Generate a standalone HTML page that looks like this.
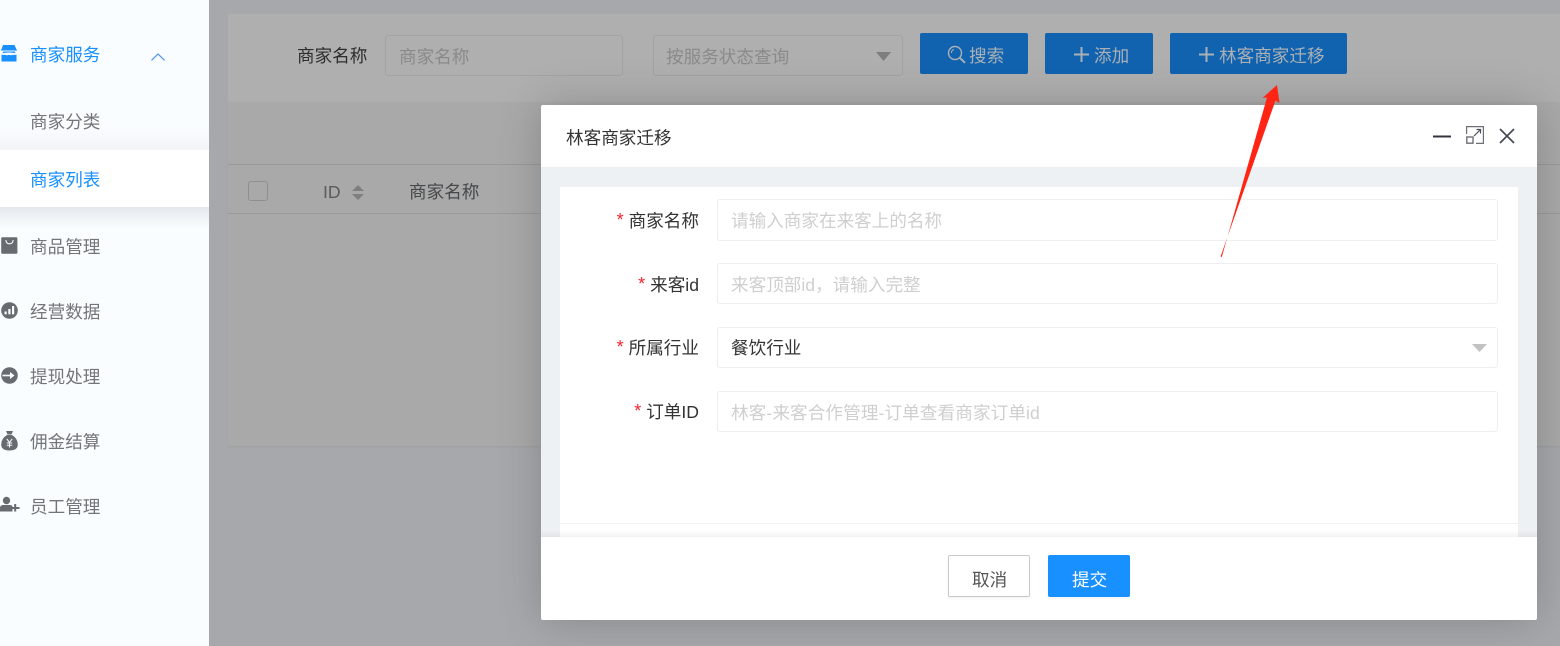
<!DOCTYPE html>
<html lang="zh">
<head>
<meta charset="utf-8">
<title>林客商家迁移</title>
<style>
html,body{margin:0;padding:0;width:1560px;height:646px;overflow:hidden;background:#a6a8ab;}
body{position:relative;font-family:"Liberation Sans","Noto Sans CJK SC",sans-serif;font-size:17.6px;color:#333;}
.a{position:absolute;}
.t{position:absolute;white-space:nowrap;line-height:24px;height:24px;}
#side{left:0;top:0;width:209px;height:646px;background:#fafdff;}
.grey{color:#737577;}
.blue{color:#1890ff;}
.btn{position:absolute;top:33px;height:41px;background:#1162af;border-radius:2px;color:#a9b0b6;}
.inp{position:absolute;left:717px;width:779px;border:1px solid #eeeeee;border-radius:3px;background:#fff;}
.lab{position:absolute;width:200px;left:499px;text-align:right;color:#333;line-height:24px;height:24px;white-space:nowrap;}
.lab i{font-style:normal;color:#f5222d;font-size:18px;margin-right:5px;position:relative;top:-1px;}
.ph{color:#cfcfcf;}
svg{position:absolute;overflow:visible;}
</style>
</head>
<body>
<!-- sidebar -->
<div id="side" class="a">
  <div class="a" style="left:0;top:126px;width:209px;height:24px;background:linear-gradient(#fafdff,#f2f4f7);"></div>
  <div class="a" style="left:0;top:150px;width:209px;height:57px;background:#fff;"></div>
  <div class="a" style="left:0;top:207px;width:209px;height:22px;background:linear-gradient(#e4e8ed,#fafdff);"></div>
</div>
<svg style="left:0;top:44px" width="18" height="18" viewBox="0 0 18 18">
  <path d="M3 1H14.500L17 6.500Q16.500 6.800 15 6.500H3Q1.500 6.800 1 6.500Z" fill="#1890ff"/>
  <path d="M3.200 7.500H14.800L15.500 9.300Q13 8.500 9 8.500 5 8.500 2.500 9.300Z" fill="#1890ff"/>
  <path d="M1.500 10.500Q3.500 11.300 5 10.800 7 11.800 9 10.800 11 11.800 13 10.800 14.500 11.300 16.500 10.500V17.500H1.500Z" fill="#1890ff"/>
</svg>
<div class="t blue" style="left:30px;top:43px">商家服务</div>
<svg style="left:151px;top:53px" width="14" height="8" viewBox="0 0 14 8"><path d="M.5 7.300L7 1 13.500 7.300" fill="none" stroke="#4d95ea" stroke-width="1.200"/></svg>
<div class="t grey" style="left:30px;top:110px">商家分类</div>
<div class="t blue" style="left:30px;top:168px">商家列表</div>
<svg style="left:1px;top:237px" width="17" height="17" viewBox="0 0 17 17">
  <rect x=".2" y=".2" width="16.200" height="16.600" rx="1" fill="#686b70"/>
  <path d="M5 3V3.800Q5.500 6.800 8.500 6.800 11.500 6.800 12 3.800V3" fill="none" stroke="#fafdff" stroke-width="1.100"/>
</svg>
<div class="t grey" style="left:30px;top:235px">商品管理</div>
<svg style="left:1px;top:302px" width="17" height="17" viewBox="0 0 17 17">
  <circle cx="8.500" cy="8.500" r="8.300" fill="#686b70"/>
  <rect x="3.500" y="9.500" width="2.200" height="2.800" fill="#fafdff"/>
  <rect x="7.300" y="7" width="2.200" height="5.300" fill="#fafdff"/>
  <rect x="11" y="4" width="2.200" height="8.300" fill="#fafdff"/>
</svg>
<div class="t grey" style="left:30px;top:300px">经营数据</div>
<svg style="left:1px;top:367px" width="17" height="17" viewBox="0 0 17 17">
  <circle cx="8.500" cy="8.500" r="8.300" fill="#686b70"/>
  <path d="M1.500 8.500H10" stroke="#fafdff" stroke-width="1.600"/>
  <path d="M9 5L13.500 8.500 9 12Z" fill="#fafdff"/>
</svg>
<div class="t grey" style="left:30px;top:365px">提现处理</div>
<svg style="left:1px;top:430px" width="17" height="21" viewBox="0 0 17 21">
  <path d="M5 1H12L10.500 4.500H6.500Z" fill="#686b70"/>
  <path d="M6 5H11Q16.800 8.500 16.800 14.500 16.800 20.500 8.500 20.500 .2 20.500 .2 14.500 .2 8.500 6 5Z" fill="#686b70"/>
  <path d="M5.800 9L8.500 12.300 11.200 9M8.500 12.300V17.500M5.800 13H11.200M5.800 15.200H11.200" fill="none" stroke="#fafdff" stroke-width="1"/>
</svg>
<div class="t grey" style="left:30px;top:430px">佣金结算</div>
<svg style="left:0;top:496px" width="20" height="18" viewBox="0 0 20 18">
  <circle cx="6.500" cy="4.500" r="3.700" fill="#686b70"/>
  <path d="M0 15.500V12Q0 9 3 9H10Q12 9 12.500 10.500V15.500Z" fill="#686b70"/>
  <path d="M11 12H19.500M15.200 8V15.500" stroke="#686b70" stroke-width="2"/>
</svg>
<div class="t grey" style="left:30px;top:495px">员工管理</div>

<!-- background main card -->
<div class="a" style="left:228px;top:14px;width:1332px;height:88px;background:#afafaf;"></div>
<div class="a" style="left:228px;top:102px;width:1332px;height:344px;background:#a9a9a9;box-shadow:0 1px 2px rgba(0,0,0,.06);"></div>
<div class="a" style="left:228px;top:164px;width:1332px;height:1px;background:#9a9a9a;"></div>
<div class="a" style="left:228px;top:213px;width:1332px;height:1px;background:#9a9a9a;"></div>

<div class="t" style="left:297px;top:44px;color:#2d2d2d">商家名称</div>
<div class="a" style="left:385px;top:35px;width:236px;height:39px;border:1px solid #a3a3a3;border-radius:3px;"></div>
<div class="t" style="left:399px;top:45px;color:#8a8a8a">商家名称</div>
<div class="a" style="left:653px;top:35px;width:248px;height:39px;border:1px solid #a3a3a3;border-radius:3px;"></div>
<div class="t" style="left:666px;top:45px;color:#8a8a8a">按服务状态查询</div>
<svg style="left:876px;top:52px" width="15" height="9" viewBox="0 0 15 9"><path d="M0 0H15L7.500 9Z" fill="#7e7e7e"/></svg>

<div class="btn" style="left:920px;width:108px;"></div>
<svg style="left:947px;top:45px" width="20" height="20" viewBox="0 0 20 20">
  <circle cx="8" cy="8" r="6.500" fill="none" stroke="#a9b0b6" stroke-width="1.400"/>
  <path d="M12.800 12.800L18 17.800" stroke="#a9b0b6" stroke-width="2"/>
  <path d="M4.500 8Q4.500 5 7 4.500" fill="none" stroke="#a9b0b6" stroke-width="1"/>
</svg>
<div class="t" style="left:969px;top:44px;color:#a9b0b6">搜索</div>
<div class="btn" style="left:1045px;width:108px;"></div>
<svg style="left:1074px;top:47px" width="15" height="15" viewBox="0 0 15 15"><path d="M0 7.500H15M7.500 0V15" stroke="#a9b0b6" stroke-width="2"/></svg>
<div class="t" style="left:1094px;top:44px;color:#a9b0b6">添加</div>
<div class="btn" style="left:1170px;width:177px;"></div>
<svg style="left:1199px;top:47px" width="15" height="15" viewBox="0 0 15 15"><path d="M0 7.500H15M7.500 0V15" stroke="#a9b0b6" stroke-width="2"/></svg>
<div class="t" style="left:1219px;top:44px;color:#a9b0b6">林客商家迁移</div>

<!-- table head -->
<div class="a" style="left:248px;top:181px;width:18px;height:18px;border:1px solid #8f8f8f;border-radius:3px;"></div>
<div class="t" style="left:323px;top:180px;color:#595b5e">ID</div>
<svg style="left:352px;top:185px" width="12" height="15" viewBox="0 0 12 15"><path d="M6 0L12 6H0ZM0 9H12L6 15Z" fill="#7f7f7f"/></svg>
<div class="t" style="left:409px;top:180px;color:#46484a">商家名称</div>

<!-- modal -->
<div class="a" style="left:541px;top:105px;width:996px;height:515px;background:#fff;border-radius:2px;box-shadow:0 0 45px rgba(0,0,0,.2);"></div>
<div class="a" style="left:541px;top:167px;width:996px;height:370px;background:#eef1f4;"></div>
<div class="a" style="left:560px;top:187px;width:958px;height:350px;background:#fff;"></div>
<div class="a" style="left:560px;top:523px;width:958px;height:1px;background:#f2f2f2;"></div>
<div class="a" style="left:541px;top:530px;width:996px;height:7px;background:linear-gradient(rgba(0,0,0,0),rgba(0,0,0,.05));"></div>

<div class="t" style="left:566px;top:126px;color:#333">林客商家迁移</div>
<svg style="left:1433px;top:135px" width="19" height="3"><rect width="18" height="2" y=".5" fill="#33363f"/></svg>
<svg style="left:1466px;top:126px" width="18" height="18" viewBox="0 0 18 18">
  <path d="M.6 8V.6H17.400V17.400H10" fill="none" stroke="#6e7078" stroke-width="1.200"/>
  <rect x=".8" y="11" width="6.200" height="6.200" fill="none" stroke="#6e7078" stroke-width="1.400"/>
  <path d="M8 10L14.500 3.500M10.500 3.500H14.500V7.500" fill="none" stroke="#4c4f57" stroke-width="1.200"/>
</svg>
<svg style="left:1499px;top:128px" width="16" height="16" viewBox="0 0 16 16"><path d="M1 1L15 15M15 1L1 15" stroke="#464952" stroke-width="1.700"/></svg>

<!-- form -->
<div class="lab" style="top:209px"><i>*</i>商家名称</div>
<div class="inp" style="top:199px;height:40px;"></div>
<div class="t ph" style="left:731px;top:209px">请输入商家在来客上的名称</div>

<div class="lab" style="top:273px"><i>*</i>来客id</div>
<div class="inp" style="top:263px;height:39px;"></div>
<div class="t ph" style="left:731px;top:273px">来客顶部id，请输入完整</div>

<div class="lab" style="top:336px"><i>*</i>所属行业</div>
<div class="inp" style="top:327px;height:39px;"></div>
<div class="t" style="left:731px;top:336px;color:#333">餐饮行业</div>
<svg style="left:1472px;top:344px" width="15" height="8" viewBox="0 0 15 8"><path d="M0 0H15L7.500 8Z" fill="#c2c2c2"/></svg>

<div class="lab" style="top:400px"><i>*</i>订单ID</div>
<div class="inp" style="top:391px;height:39px;"></div>
<div class="t ph" style="left:731px;top:401px;word-spacing:0;letter-spacing:.1px">林客-来客合作管理-订单查看商家订单id</div>

<!-- footer -->
<div class="a" style="left:948px;top:555px;width:80px;height:40px;border:1px solid #c9c9c9;border-radius:2px;background:#fff;box-shadow:0 2px 2px rgba(0,0,0,.04);"></div>
<div class="t" style="left:972px;top:568px;color:#555">取消</div>
<div class="a" style="left:1048px;top:555px;width:82px;height:42px;border-radius:2px;background:#1890ff;box-shadow:0 2px 2px rgba(0,0,0,.04);"></div>
<div class="t" style="left:1072px;top:568px;color:#fff">提交</div>

<!-- red arrow -->
<svg style="left:0;top:0" width="1560" height="646" viewBox="0 0 1560 646">
  <path d="M1220.600 256.500L1221.800 257L1267 97.500 1262.500 98 1277 85 1279.500 103 1275.500 100.500Z" fill="#ff2414"/>
</svg>
</body>
</html>
